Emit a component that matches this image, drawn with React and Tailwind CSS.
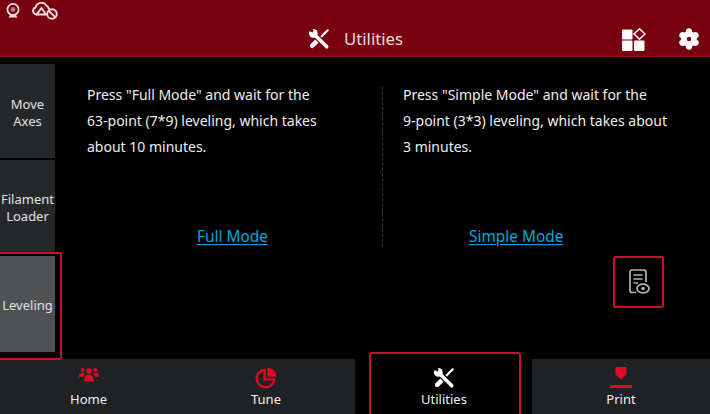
import { Settings } from 'lucide-react'

const FONT = 'font-["Noto_Sans",sans-serif]'

const WrenchCross = ({ size = 22, cut = '#000' }) => (
  <svg width={size} height={size} viewBox="0 0 24 24" fill="none">
    {/* screwdriver */}
    <path d="M21.5 2.5 L12 12" stroke="white" strokeWidth="2.4" strokeLinecap="round" />
    <path d="M11 13 L4.5 19.5" stroke="white" strokeWidth="5" strokeLinecap="round" />
    {/* spanner */}
    <path d="M7 7 L20.5 20.5" stroke={cut} strokeWidth="6.4" />
    <path d="M7 7 L20.5 20.5" stroke="white" strokeWidth="3.8" strokeLinecap="round" />
    <circle cx="5.8" cy="5.8" r="4.8" fill="white" />
    <path d="M5 5 L1 1 L5.5 -1 L7 3 Z" fill={cut} transform="rotate(-20 5 5)" />
  </svg>
)

const Webcam = () => (
  <svg width="14" height="17" viewBox="0 0 14 17">
    <circle cx="7" cy="6.5" r="5.6" fill="none" stroke="#f3dfe0" strokeWidth="1.8" />
    <circle cx="7" cy="6.5" r="2.4" fill="#f3dfe0" fillOpacity="0.55" />
    <path d="M2.5 14.5 H11.5 L10 12 H4 Z" fill="#f3dfe0" />
  </svg>
)

const CloudOff = () => (
  <svg width="28" height="18" viewBox="0 0 28 18" fill="none" stroke="#f3dfe0" strokeWidth="1.9">
    <path d="M15 12.5 H5.5 A3.6 3.6 0 0 1 4.6 5.5 A6 6 0 0 1 15.5 3.6 A5 5 0 0 1 18 7" strokeLinecap="round" />
    <path d="M5.5 12.5 L10.5 6 L14 11" strokeLinecap="round" />
    <circle cx="21" cy="12" r="4.8" />
    <path d="M17.8 8.8 L24.2 15.2" />
  </svg>
)

const Apps = () => (
  <svg width="24" height="23" viewBox="0 0 24 23" fill="white">
    <rect x="0" y="1.5" width="10.5" height="10" rx="1" />
    <rect x="0" y="12.5" width="10.5" height="10.5" rx="1" />
    <rect x="12" y="12.5" width="10.5" height="10.5" rx="1" />
    <path d="M17.5 0.8 L23 6 L17.5 11.2 L12 6 Z" fill="none" stroke="white" strokeWidth="1.5" />
  </svg>
)

const ReportEye = () => (
  <svg width="22" height="26" viewBox="0 0 22 26" fill="none" stroke="#b4b4b4" strokeWidth="1.7">
    <path d="M8 23.5 H4 A2 2 0 0 1 2 21.5 V3 A2 2 0 0 1 4 1 H16 A2 2 0 0 1 18 3 V13" />
    <path d="M5.5 6 H14.5 M5.5 10 H14.5 M5.5 14 H10" />
    <ellipse cx="15" cy="19.5" rx="6" ry="4.4" />
    <circle cx="15" cy="19.5" r="1.8" fill="#b4b4b4" stroke="none" />
  </svg>
)

const People = () => (
  <svg width="22" height="15" viewBox="0 0 24 17" fill="#e00b22">
    <circle cx="12" cy="4.5" r="3.2" />
    <path d="M6.5 16.5 C6.5 11 8.5 8.5 12 8.5 C15.5 8.5 17.5 11 17.5 16.5 Z" />
    <circle cx="4.8" cy="3.4" r="2.3" />
    <path d="M0.5 11 C0.5 7.5 2.5 6.5 4.8 6.5 C6 6.5 7 7 7.5 7.5 C6 9 5.3 10 5 11 Z" />
    <circle cx="19.2" cy="3.4" r="2.3" />
    <path d="M23.5 11 C23.5 7.5 21.5 6.5 19.2 6.5 C18 6.5 17 7 16.5 7.5 C18 9 18.7 10 19 11 Z" />
  </svg>
)

const Pie = () => (
  <svg width="22" height="22" viewBox="0 0 24 24" fill="none">
    <path d="M10.5 3 A9.6 9.6 0 1 0 21 13.5 H10.5 Z" stroke="#e00b22" strokeWidth="2.6" fill="none" />
    <path d="M13.5 0.5 A10.5 10.5 0 0 1 23.5 10.5 H13.5 Z" fill="#e00b22" />
  </svg>
)

const Nozzle = () => (
  <svg width="22" height="21" viewBox="0 0 22 21" fill="#e00b22">
    <path d="M5.5 0 H16.5 V7.5 L11 12.5 L5.5 7.5 Z" />
    <rect x="0" y="18" width="22" height="3" />
  </svg>
)

const SideItem = ({ children, className = '' }) => (
  <div className={`flex items-center justify-center text-center text-[13px] leading-[17.5px] pt-[4px] text-[#e0e2e2] ${className}`}>
    {children}
  </div>
)

const Column = ({ lines, link, linkClass, className = '' }) => (
  <div className={`flex flex-col ${className}`}>
    <div className="text-[14px] leading-[26px] text-[#eeeeee] whitespace-nowrap">
      {lines.map(l => <p key={l}>{l}</p>)}
    </div>
    <a className={`text-[15.4px] leading-[20px] text-[#00a8d8] underline underline-offset-2 ${linkClass}`}>{link}</a>
  </div>
)

const TabItem = ({ icon, label, className = '' }) => (
  <div className={`flex flex-col items-center h-full pt-[8px] ${className}`}>
    <div className="h-[22px] flex items-start justify-center">{icon}</div>
    <span className="text-[13px] leading-[18px] mt-[1px] text-[#f0f0f0]">{label}</span>
  </div>
)

export default function App() {
  return (
    <div className={`relative w-[710px] h-[414px] overflow-hidden bg-black flex flex-col ${FONT}`}>
      <header className="relative h-[57px] shrink-0 bg-[#79000f] border-b border-[#8f0a1c] flex items-center justify-center pt-[21px]">
        <div className="absolute left-[6px] top-[2px] flex items-center gap-[11px]">
          <Webcam />
          <CloudOff />
        </div>
        <div className="flex items-center gap-[14px] ml-[1px]">
          <WrenchCross cut="#79000f" />
          <span className="text-[16.8px] text-[#e8dcdc]">Utilities</span>
        </div>
        <div className="absolute right-[9px] top-[27px] flex items-center gap-[31px]">
          <Apps />
          <Settings size={24} color="white" fill="white" stroke="white" strokeWidth={1.5} className="[&>circle]:fill-[#79000f]" />
        </div>
      </header>

      <main className="flex h-[302px] shrink-0">
        <aside className="w-[55px] shrink-0 flex flex-col pt-[7px]">
          <SideItem className="h-[94px] bg-[#25282b]">Move<br />Axes</SideItem>
          <SideItem className="h-[92px] mt-[2px] bg-[#25282b]">Filament<br />Loader</SideItem>
          <SideItem className="h-[96px] mt-[4px] bg-[#4d5153]">Leveling</SideItem>
        </aside>
        <div className="flex-1 flex pt-[25px]">
          <Column
            className="w-[327px] pl-[32px]"
            lines={['Press "Full Mode" and wait for the', '63-point (7*9) leveling, which takes', 'about 10 minutes.']}
            link="Full Mode"
            linkClass="mt-[67px] ml-[110px]"
          />
          <div className="h-[160px] mt-[5px] border-l border-dashed border-[#3a3a3a]" />
          <Column
            className="pl-[20px]"
            lines={['Press "Simple Mode" and wait for the', '9-point (3*3) leveling, which takes about', '3 minutes.']}
            link="Simple Mode"
            linkClass="mt-[67px] ml-[66px]"
          />
        </div>
      </main>

      <nav className="flex h-[55px] shrink-0">
        <div className="w-[355px] flex bg-[#1e2225]">
          <TabItem className="w-[177px]" icon={<People />} label="Home" />
          <TabItem className="w-[178px]" icon={<Pie />} label="Tune" />
        </div>
        <TabItem className="w-[150px] ml-[14px] mr-[2px]" icon={<WrenchCross />} label="Utilities" />
        <TabItem className="flex-1 ml-[11px] bg-[#1e2225]" icon={<Nozzle />} label="Print" />
      </nav>

      {/* red callouts */}
      <div className="absolute left-[-4px] top-[252px] w-[66px] h-[108px] border-2 border-[#c8102e] rounded-[2px]" />
      <div className="absolute left-[613px] top-[256px] w-[51px] h-[52px] border-2 border-[#c8102e] rounded-[2px] flex items-center justify-center">
        <ReportEye />
      </div>
      <div className="absolute left-[369px] top-[352px] w-[152px] h-[70px] border-2 border-[#c8102e] rounded-[3px]" />
    </div>
  )
}
